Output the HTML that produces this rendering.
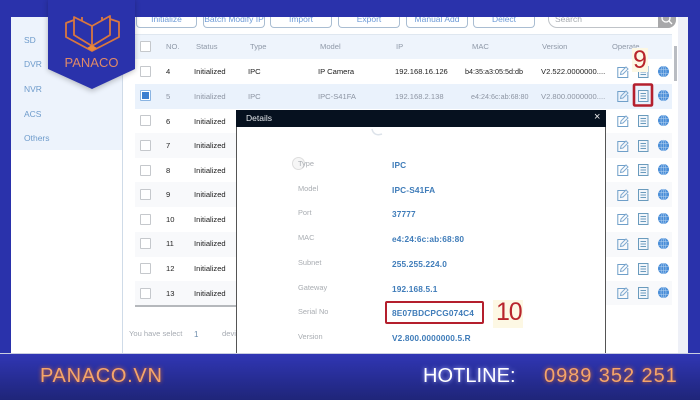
<!DOCTYPE html>
<html><head><meta charset="utf-8"><style>
html,body{margin:0;padding:0}
body{width:700px;height:400px;position:relative;overflow:hidden;background:#2a32ab;font-family:"Liberation Sans",sans-serif}
div,span{position:absolute;white-space:nowrap}
.c{font-size:7.6px;color:#222;line-height:10px;margin-top:1px}
.g{color:#8d95a3}
.h{font-size:7.6px;color:#8f99a8;line-height:10px;top:42px}
.b{top:12px;height:16px;border:1px solid #a9bdd2;border-radius:0 0 4px 4px;border-top:0;color:#6d9ad6;font-size:8.5px;line-height:8px;text-align:center;padding-top:3px;box-sizing:border-box;background:#fff}
.s{left:24px;font-size:8.5px;color:#6e9bcb;line-height:10px}
.k{left:140px;width:9px;height:9px;border:1px solid #c5c8cc;background:#fff;border-radius:1px;box-sizing:content-box}
.l{left:298px;font-size:7.4px;color:#a9adb2;line-height:10px;margin-top:1px}
.v{left:392px;font-size:8.3px;font-weight:bold;color:#3f7cb9;line-height:10px;letter-spacing:.15px}
</style></head><body>
<div style="left:11px;top:17px;width:677px;height:336px;background:#fff"></div>
<div style="left:11px;top:17px;width:111px;height:133px;background:#edf3fc"></div>
<div style="left:122px;top:17px;width:1px;height:336px;background:#cfdbe8"></div>
<div class="s" style="top:35px">SD</div><div class="s" style="top:59px">DVR</div><div class="s" style="top:84px">NVR</div><div class="s" style="top:109px">ACS</div><div class="s" style="top:133px">Others</div>

<div class="b" style="left:136px;width:61px">Initialize</div>
<div class="b" style="left:203px;width:62px">Batch Modify IP</div>
<div class="b" style="left:270px;width:62px">Import</div>
<div class="b" style="left:338px;width:62px">Export</div>
<div class="b" style="left:406px;width:62px">Manual Add</div>
<div class="b" style="left:473px;width:62px">Delect</div>
<div style="left:548px;top:12px;width:128px;height:16px;border:1px solid #bfc3c8;border-top:0;border-radius:0 0 9px 9px;box-sizing:border-box;color:#a5a9ae;font-size:8.5px;line-height:8px;padding:3px 0 0 6px">Search</div>
<div style="left:658px;top:17px;width:18px;height:11px;background:#a8a8aa;border-radius:0 0 8px 0"></div>
<svg style="position:absolute;left:660px;top:17px" width="14" height="10"><circle cx="6" cy="1" r="4" fill="none" stroke="#fff" stroke-width="1.3"/><path d="M9 4l3 3" stroke="#fff" stroke-width="1.3"/></svg>

<div style="left:135px;top:34px;width:537px;height:25px;background:#eef4fc;border-top:1px solid #dfe7f0;box-sizing:border-box"></div>
<div style="left:135px;top:84px;width:537px;height:25px;background:#eaf2fc"></div>
<div style="left:135px;top:109px;width:537px;height:24px;background:#fff"></div>
<div style="left:135px;top:133px;width:537px;height:25px;background:#f8f9fb"></div>
<div style="left:135px;top:182px;width:537px;height:25px;background:#f8f9fb"></div>
<div style="left:135px;top:232px;width:537px;height:25px;background:#f8f9fb"></div>
<div style="left:135px;top:281px;width:537px;height:24px;background:#f8f9fb"></div>
<div style="left:135px;top:305px;width:102px;height:2px;background:#b5b8bc"></div>
<div style="left:674px;top:46px;width:3px;height:35px;background:#b9bcc2"></div>
<div style="left:678px;top:17px;width:10px;height:336px;background:#eef0f7"></div>

<div class="k" style="top:41px"></div>
<div class="h" style="left:166px">NO.</div><div class="h" style="left:196px">Status</div><div class="h" style="left:250px">Type</div><div class="h" style="left:320px">Model</div><div class="h" style="left:396px">IP</div><div class="h" style="left:472px">MAC</div><div class="h" style="left:542px">Version</div><div class="h" style="left:612px">Operate</div>

<div class="k" style="top:66px"></div><div class="c" style="left:166px;top:66px">4</div><div class="c" style="left:194px;top:66px">Initialized</div><div class="c" style="left:248px;top:66px">IPC</div><div class="c" style="left:318px;top:66px">IP Camera</div><div class="c" style="left:395px;top:66px">192.168.16.126</div><div class="c" style="left:465px;top:66px;font-size:7.2px">b4:35:a3:05:5d:db</div><div class="c" style="left:541px;top:66px">V2.522.0000000....</div>

<div class="k" style="top:90px;border-color:#8ab4e2"></div><div style="left:142px;top:92px;width:7px;height:7px;background:#3c7fd0"></div>
<div class="c g" style="left:166px;top:91px">5</div><div class="c g" style="left:194px;top:91px">Initialized</div><div class="c g" style="left:248px;top:91px">IPC</div><div class="c g" style="left:318px;top:91px">IPC-S41FA</div><div class="c g" style="left:395px;top:91px">192.168.2.138</div><div class="c g" style="left:471px;top:91px;font-size:7.2px">e4:24:6c:ab:68:80</div><div class="c g" style="left:541px;top:91px">V2.800.0000000....</div>

<div class="k" style="top:115px"></div><div class="c" style="left:166px;top:116px">6</div><div class="c" style="left:194px;top:116px">Initialized</div>
<div class="k" style="top:140px"></div><div class="c" style="left:166px;top:140px">7</div><div class="c" style="left:194px;top:140px">Initialized</div>
<div class="k" style="top:165px"></div><div class="c" style="left:166px;top:165px">8</div><div class="c" style="left:194px;top:165px">Initialized</div>
<div class="k" style="top:189px"></div><div class="c" style="left:166px;top:189px">9</div><div class="c" style="left:194px;top:189px">Initialized</div>
<div class="k" style="top:214px"></div><div class="c" style="left:166px;top:214px">10</div><div class="c" style="left:194px;top:214px">Initialized</div>
<div class="k" style="top:238px"></div><div class="c" style="left:166px;top:238px">11</div><div class="c" style="left:194px;top:238px">Initialized</div>
<div class="k" style="top:263px"></div><div class="c" style="left:166px;top:263px">12</div><div class="c" style="left:194px;top:263px">Initialized</div>
<div class="k" style="top:288px"></div><div class="c" style="left:166px;top:288px">13</div><div class="c" style="left:194px;top:288px">Initialized</div>

<div class="c" style="left:129px;top:328px;color:#a6abb2">You have select</div><div class="c" style="left:194px;top:329px;color:#6d8cab;font-size:8px">1</div><div class="c" style="left:222px;top:328px;color:#a6abb2">devi</div>

<svg style="position:absolute;left:0;top:0" width="700" height="400">
<defs>
<g id="e" fill="none" stroke="#6f9fc9" stroke-width="1"><path d="M8.5 1.5H.8v10h10V5"/><path d="M3.5 8.5l.5-2.5 5-5 2 2-5 5z" stroke="#7fa9cf"/></g>
<g id="d" fill="none" stroke="#6a9bbd" stroke-width="1"><rect x=".5" y=".5" width="9.5" height="11" fill="#f2f6fb"/><path d="M2.5 3.5h5.5M2.5 6h5.5M2.5 8.5h5.5"/></g>
<g id="w"><circle cx="5.5" cy="5.5" r="5.5" fill="#4a8ed8"/><g fill="none" stroke="#b5d2f0" stroke-width=".55"><ellipse cx="5.5" cy="5.5" rx="2.5" ry="5.4"/><path d="M5.5 0v11M.3 3.6h10.4M.3 7.4h10.4"/></g></g>
</defs>
<use href="#e" x="617" y="66"/><use href="#d" x="638" y="66"/><use href="#w" x="658" y="66"/>
<use href="#e" x="617" y="90"/><use href="#d" x="638" y="90"/><use href="#w" x="658" y="90"/>
<use href="#e" x="617" y="115"/><use href="#d" x="638" y="115"/><use href="#w" x="658" y="115"/>
<use href="#e" x="617" y="140"/><use href="#d" x="638" y="140"/><use href="#w" x="658" y="140"/>
<use href="#e" x="617" y="164"/><use href="#d" x="638" y="164"/><use href="#w" x="658" y="164"/>
<use href="#e" x="617" y="189"/><use href="#d" x="638" y="189"/><use href="#w" x="658" y="189"/>
<use href="#e" x="617" y="213"/><use href="#d" x="638" y="213"/><use href="#w" x="658" y="213"/>
<use href="#e" x="617" y="238"/><use href="#d" x="638" y="238"/><use href="#w" x="658" y="238"/>
<use href="#e" x="617" y="263"/><use href="#d" x="638" y="263"/><use href="#w" x="658" y="263"/>
<use href="#e" x="617" y="287"/><use href="#d" x="638" y="287"/><use href="#w" x="658" y="287"/>
<rect x="634" y="84.5" width="18" height="21" fill="none" stroke="#b41f2d" stroke-width="2.6" rx="1"/>
</svg>
<div style="left:632px;top:48px;width:16px;height:24px;background:#fdf8e4"></div>
<div style="left:633px;top:46px;font-size:25px;line-height:28px;color:#b8252c">9</div>

<div style="left:236px;top:110px;width:370px;height:243px;background:#fff;border-left:1px solid #555;border-right:1px solid #555;box-sizing:border-box"></div>
<div style="left:236px;top:110px;width:370px;height:17px;background:#06111f"></div>
<div style="left:246px;top:113px;font-size:8.5px;color:#e4e8ec;line-height:10px">Details</div>
<div style="left:594px;top:111px;font-size:11px;color:#eee;line-height:13px">×</div>
<svg style="position:absolute;left:370px;top:127px" width="20" height="14"><path d="M2 2c1 5 5 7 10 5" fill="none" stroke="#dde3ea" stroke-width="1.5"/></svg>
<div style="left:292px;top:157px;width:11px;height:11px;border:1px solid #ddd;border-radius:50%;background:#f6f6f6"></div>
<div class="l" style="top:158px">Type</div><div class="l" style="top:183px">Model</div><div class="l" style="top:207px">Port</div><div class="l" style="top:232px">MAC</div><div class="l" style="top:257px">Subnet</div><div class="l" style="top:282px">Gateway</div><div class="l" style="top:306px">Serial No</div><div class="l" style="top:331px">Version</div>
<div class="v" style="top:160px">IPC</div><div class="v" style="top:185px">IPC-S41FA</div><div class="v" style="top:209px">37777</div><div class="v" style="top:234px">e4:24:6c:ab:68:80</div><div class="v" style="top:259px">255.255.224.0</div><div class="v" style="top:284px">192.168.5.1</div><div class="v" style="top:308px">8E07BDCPCG074C4</div><div class="v" style="top:333px">V2.800.0000000.5.R</div>
<div style="left:385px;top:301px;width:99px;height:23px;border:2.2px solid #b41f2d;border-radius:2px;box-sizing:border-box"></div>
<div style="left:493px;top:300px;width:30px;height:28px;background:#fdf8e4"></div>
<div style="left:496px;top:297px;font-size:25px;line-height:30px;color:#b8252c;letter-spacing:-1.2px">10</div>

<div style="left:0;top:0;width:700px;height:17px;background:#2a32ab"></div>
<div style="left:0;top:353px;width:700px;height:47px;background:linear-gradient(#3036b4,#1f2579);border-top:1px solid #c9cde0;box-sizing:border-box"></div>

<svg style="position:absolute;left:40px;top:0" width="104" height="100">
<defs><filter id="sh" x="-20%" y="-20%" width="140%" height="140%"><feGaussianBlur stdDeviation="3"/></filter></defs>
<polygon points="8,0 95,0 95,70 52,91 8,70" fill="#000" opacity=".25" filter="url(#sh)"/>
<polygon points="8,0 95,0 95,69 52,89 8,69" fill="#2a32ab"/>
<g fill="none" stroke="#d9773f" stroke-width="1.8" stroke-linejoin="round">
<path d="M52 46L34 35V17L52 26L70 16V35L52 46"/>
<path d="M52 26V46"/>
<path d="M34 20L26 23V37L52 51L79 37V22L70 19"/>
<path d="M42 21V17M62 21V17"/>
</g>
<path d="M47 48L52 45L57 48L52 51Z" fill="#e88a3c"/>
<text x="51.5" y="67" text-anchor="middle" font-family="Liberation Sans,sans-serif" font-size="13px" fill="#df8a68" textLength="54">PANACO</text>
</svg>

<div style="left:40px;top:364px;font-size:20px;line-height:24px;color:#f6a569;letter-spacing:.7px;text-shadow:0 0 4px #e0702f">PANACO.VN</div>
<div style="left:423px;top:364px;font-size:20px;line-height:24px;color:#fff;letter-spacing:.05px;text-shadow:0 0 4px #a9b0ff">HOTLINE:</div>
<div style="left:544px;top:364px;font-size:20px;line-height:24px;color:#f6a569;letter-spacing:.95px;text-shadow:0 0 4px #e0702f">0989 352 251</div>
</body></html>
